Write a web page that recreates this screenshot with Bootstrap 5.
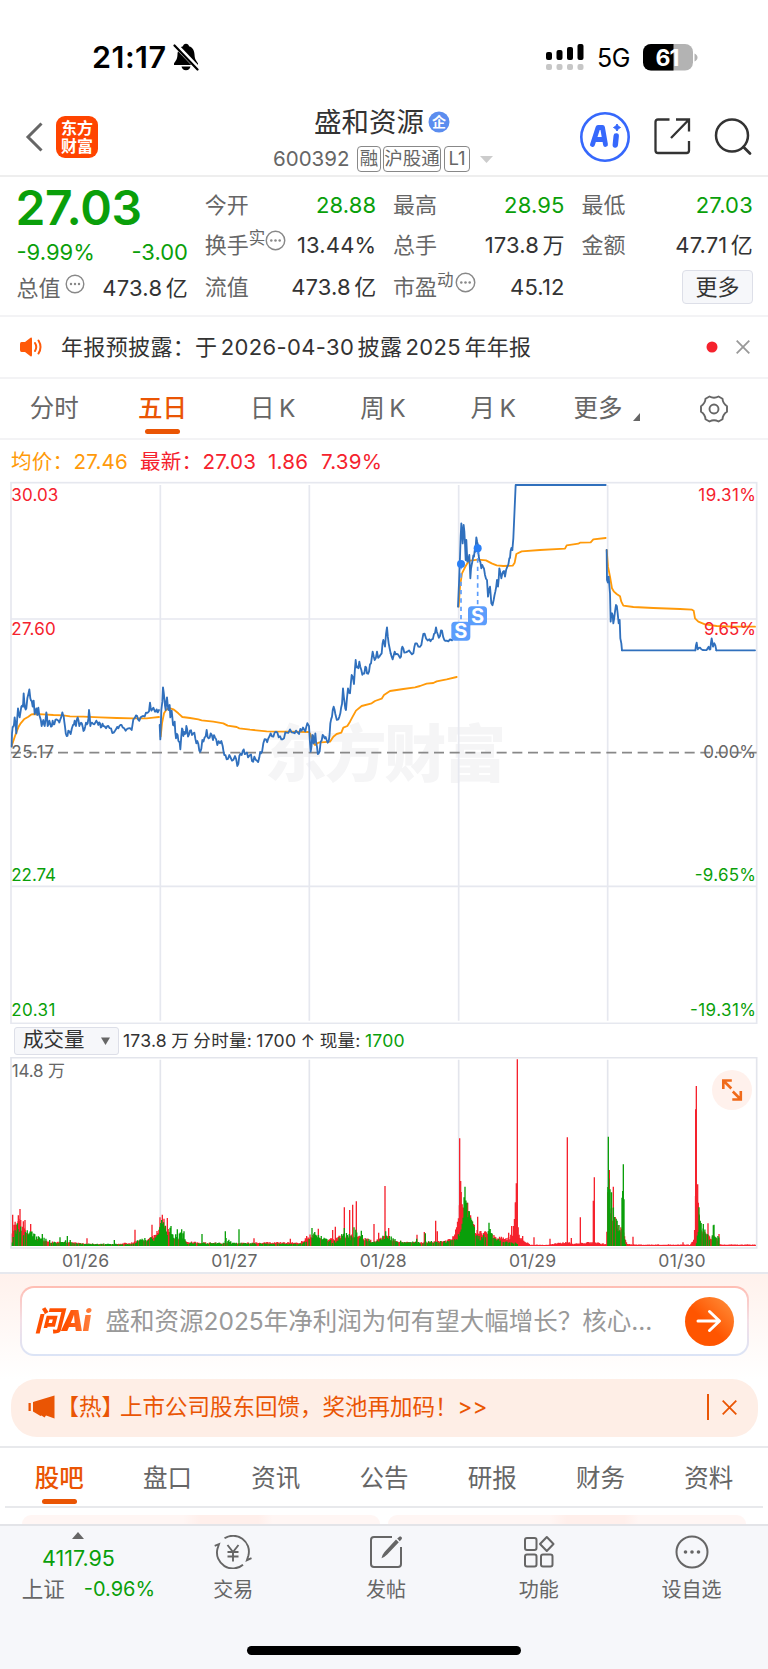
<!DOCTYPE html>
<html lang="zh-CN">
<head>
<meta charset="utf-8">
<meta name="viewport" content="width=device-width, initial-scale=1">
<title>盛和资源 600392</title>
<link href="https://cdn.jsdelivr.net/npm/bootstrap@5.3.0/dist/css/bootstrap.min.css" rel="stylesheet">
<style>
:root{--up:#f5222d;--dn:#0a9f0a;--or:#ea5504;--gr:#666}
body{width:768px;height:1669px;overflow:hidden;margin:0;background:#fff;color:#333;font-family:Inter,"Noto Sans CJK SC",sans-serif;font-size:22px;line-height:1;position:relative}
svg{display:block;flex:none}
.dn{color:var(--dn)}.up{color:var(--up)}.gr{color:var(--gr)}
.statusbar{height:98px;padding:16px 70px 0 92px}
.clock{font-size:30.5px;font-weight:600;color:#000;letter-spacing:.5px;width:78px;white-space:nowrap}
.net{font-size:25px;color:#000;letter-spacing:-.4px}
.head{height:79px;padding:0 16px 0 25px;border-bottom:2px solid #eee}
.logo{width:42px;height:42px;border-radius:9px;background:#ff4400;color:#fff;font-size:16px;line-height:18px;font-weight:700;margin-left:13px}
.stock{font-size:27.5px;height:32px;line-height:32px;color:#333}
.code{font-size:20.5px;color:var(--gr);height:32px}
.tag{border:1.5px solid #888;border-radius:4px;font-size:18.5px;height:26px;line-height:23px;text-align:center;white-space:nowrap;color:var(--gr)}
.quote{height:140px;padding:0 16px 0 16.5px;border-bottom:2px solid #f3f3f5;display:grid;grid-template-columns:repeat(4,171.5px);column-gap:16.8px;word-spacing:-3px}
.quote .cell{height:42px}
.quote .cell:first-child{height:39px}
.quote .cell>span:last-child:not(.more){letter-spacing:.15px}
.price{font-size:48px;font-weight:600;letter-spacing:-.3px;line-height:48px;height:54px;padding-top:7px;margin-left:-1px}
.sup{font-size:16.5px;margin-top:-14px}
.more{width:71px;height:34px;border:1.5px solid #dddfe8;background:#f6f7fa;border-radius:4px;font-size:22px}
.notice{height:62px;border-bottom:2px solid #f3f3f5;padding:0 18px 0 19px}
.noticetext{word-spacing:-3.2px;letter-spacing:.35px}
.ktabs{height:61px;border-bottom:2px solid #f3f3f5;font-size:24.5px;color:var(--gr);word-spacing:-2.5px}
.tabitem{flex:1 1 0;position:relative;height:100%;display:flex;align-items:center;justify-content:center}
.tabitem.on{color:var(--or);font-weight:500}
.tabitem.on::after{content:"";position:absolute;bottom:4px;left:50%;width:35px;height:5.5px;margin-left:-17.5px;border-radius:3px;background:var(--or)}
.ktabs .latin{padding-left:2px}
.legend{height:40px;padding:5px 0 0 11px;font-size:20.6px;letter-spacing:.2px}
.volhead{height:33px;padding-left:14px;font-size:17.6px;color:#333}
.voltext{word-spacing:-.8px;letter-spacing:.2px}
.volbtn{width:105px;height:28px;border:1.5px solid #dddfe8;background:#f6f7fa;border-radius:3px;font-size:20.5px;padding:0 8px}
.dates{height:25px;border-bottom:2px solid #e6e8ee;padding:1px 11px 0;font-size:17.6px;letter-spacing:.2px;color:var(--gr)}
.ask{height:105px;background:linear-gradient(#fff1ec,#fff);padding:12px 19.5px 0}
.askbox{height:70px;border:2px solid transparent;border-radius:14px;background:linear-gradient(#fff,#fff) padding-box,linear-gradient(#ffbdb3,#f3dfe6 50%,#dbe4f6) border-box;padding:0 13px 0 13px}
.wen{font-size:28px;font-weight:900;font-style:italic;letter-spacing:-1px;width:71px;white-space:nowrap;line-height:36px;background:linear-gradient(90deg,#ff5000 45%,#ff8040 80%);-webkit-background-clip:text;color:transparent}
.q{font-size:24.5px;color:#999}
.go{width:49px;height:49px;border-radius:50%;background:linear-gradient(225deg,#ff9440,#ff5500 55%)}
.promo{height:58px;margin:0 10.5px;border-radius:26px;background:#feeee6;color:var(--or);font-size:22.5px;padding:0 21px 2px 17px}
.btabs{height:62px;margin-top:9px;border-top:2px solid #e8e9ec;padding:0 5px;font-size:24.5px;color:var(--gr);position:relative}
.btabs::after{content:"";position:absolute;left:5px;right:5px;bottom:0;height:2px;background:#e8e9ec}
.btabs .tabitem.on::after{bottom:4px}
.peek{height:16px;padding:7px 22px 0;gap:8px}
.peek div{flex:1;background:linear-gradient(90deg,#fff6f4 45%,#ffefeb 50%,#ffefeb 66%,#fff6f4 70%);border-radius:10px 10px 0 0}
.dock{height:146px;background:#f6f7fa;border-top:2px solid #e3e4e8;padding:0 0 0 4px;position:relative;font-size:20px;color:var(--gr)}
.dock .it{width:152.8px;height:120px;padding-top:9px}
.dock .it span{margin-top:11px}
.home{position:absolute;left:247px;bottom:15px;width:274px;height:9px;border-radius:5px;background:#000}
.expand{position:absolute;left:711px;top:12px}
</style>
</head>
<body class="d-flex flex-column">

<div class="statusbar d-flex align-items-center flex-shrink-0">
  <span class="clock">21:17</span>
  <svg style="margin-left:2px" width="28" height="28" viewBox="0 0 28 28"><path d="M14 .8c-1.700 0-2.800 1-3 2.400C7 4.500 5.600 8 5.500 11.500 5.300 16.500 3.500 18 2 20.500V22h24v-1.500c-1.500-2.500-3.300-4-3.500-9-.1-3.500-1.500-7-5.500-8.300C16.800 1.800 15.700.8 14 .8zM9.500 23.500a4.600 4.600 0 0 0 9 0z" fill="#000"/><path d="M3 1.500 26.500 26" stroke="#fff" stroke-width="5"/><path d="M2.500 2.500 25.500 26.500" stroke="#000" stroke-width="2.200" stroke-linecap="round"/></svg>
  <svg class="ms-auto" width="38" height="27" viewBox="0 0 38 27"><g fill="#000"><rect x="0" y="8" width="6" height="8" rx="2"/><rect x="10.500" y="6" width="6" height="10" rx="2"/><rect x="21" y="3" width="6" height="13" rx="2"/><rect x="31.500" y="0" width="6" height="16" rx="2"/></g><g fill="#c6c6c6"><rect x="0" y="20" width="6" height="6" rx="2"/><rect x="10.500" y="20" width="6" height="6" rx="2"/><rect x="21" y="20" width="6" height="6" rx="2"/><rect x="31.500" y="20" width="6" height="6" rx="2"/></g></svg>
  <span class="net" style="margin:3px 13px 0 13px">5G</span>
  <svg width="55" height="27" viewBox="0 0 55 27"><defs><clipPath id="bat"><rect width="50" height="26.500" rx="8"/></clipPath></defs><g clip-path="url(#bat)"><rect width="50" height="27" fill="#b3b3b3"/><rect width="30.500" height="27" fill="#000"/></g><path d="M51.500 9.500c4 1.500 4 6.500 0 8z" fill="#b3b3b3"/><text x="24" y="21.500" font-size="23" font-weight="700" fill="#fff" text-anchor="middle" letter-spacing="-1">61</text></svg>
</div>

<header class="head d-flex align-items-center flex-shrink-0 position-relative">
  <svg width="18" height="30" viewBox="0 0 18 30"><path d="M16.500 1.500 3 15l13.500 13.500" fill="none" stroke="#666" stroke-width="3"/></svg>
  <div class="logo d-flex flex-column align-items-center justify-content-center"><span>东方</span><span>财富</span></div>
  <div class="position-absolute start-0 end-0 d-flex flex-column" style="top:8px;pointer-events:none">
    <div class="stock d-flex align-items-center" style="padding-left:314px">盛和资源
      <svg style="margin-left:4px" width="22" height="22" viewBox="0 0 22 22"><circle cx="11" cy="11" r="10.500" fill="#5b8def"/><text x="11" y="16" font-size="14" font-weight="700" fill="#fff" text-anchor="middle">企</text></svg>
    </div>
    <div class="code d-flex align-items-center" style="padding:2px 0 0 273px;margin-top:4px"><span style="width:84px">600392</span><span class="tag" style="width:24px">融</span><span class="tag" style="margin-left:2px;width:58px">沪股通</span><span class="tag" style="margin-left:3px;width:26px">L1</span>
      <svg style="margin-left:10px" width="13" height="7"><path d="M0 0h13L6.500 7z" fill="#ccc"/></svg></div>
  </div>
  <svg class="ms-auto" width="52" height="52" viewBox="0 0 52 52"><circle cx="26" cy="26" r="23.700" fill="#fff" stroke="#3668fc" stroke-width="2.600"/><path d="M13.500 33.500 19 16.500h4.500l3 17M17 28.500h8" fill="none" stroke="#3668fc" stroke-width="4.800" stroke-linejoin="round" stroke-linecap="round"/><path d="M37.200 25 36.300 34" stroke="#3668fc" stroke-width="5.400" stroke-linecap="round"/><path d="M38 13q.8 2.700 3.500 3.500-2.700.8-3.500 3.500-.8-2.700-3.500-3.500Q37.200 15.700 38 13z" fill="#3668fc" stroke="#3668fc"/></svg>
  <svg style="margin-left:23px" width="37" height="37" viewBox="0 0 37 37"><path d="M15.500 1.500H4Q1.500 1.500 1.500 4v28.500Q1.500 35 4 35h28.500q2.500 0 2.500-2.500V23M22 1.500h13v12M35 1.500 17 20" fill="none" stroke="#333" stroke-width="2.300"/></svg>
  <svg style="margin-left:23px" width="38" height="38" viewBox="0 0 38 38"><circle cx="18" cy="17.500" r="16" fill="none" stroke="#333" stroke-width="2.500"/><path d="m29.500 29 6.500 6.500" stroke="#333" stroke-width="2.800" stroke-linecap="round"/></svg>
</header>

<section class="quote flex-shrink-0">
  <div>
    <div class="price dn">27.03</div>
    <div class="dn d-flex justify-content-between align-items-center" style="height:42px"><span>-9.99%</span><span>-3.00</span></div>
    <div class="d-flex justify-content-between align-items-center" style="height:30px"><span class="gr d-flex">总值<svg width="20" height="20" viewBox="0 0 20 20" style="margin:-3px 0 0 4px"><use href="#dots"/></svg></span><span style="letter-spacing:.25px">473.8 亿</span></div>
  </div>
  <div class="pt-1 mt-1">
    <div class="cell d-flex justify-content-between align-items-center"><span class="gr">今开</span><span class="dn">28.88</span></div>
    <div class="cell d-flex justify-content-between align-items-center"><span class="gr d-flex align-items-center">换手<span class="sup">实</span><svg width="21" height="21" viewBox="0 0 20 20" style="margin-top:-9px"><use href="#dots"/></svg></span><span>13.44%</span></div>
    <div class="cell d-flex justify-content-between align-items-center"><span class="gr">流值</span><span>473.8 亿</span></div>
  </div>
  <div class="pt-1 mt-1">
    <div class="cell d-flex justify-content-between align-items-center"><span class="gr">最高</span><span class="dn">28.95</span></div>
    <div class="cell d-flex justify-content-between align-items-center"><span class="gr">总手</span><span>173.8 万</span></div>
    <div class="cell d-flex justify-content-between align-items-center"><span class="gr d-flex align-items-center">市盈<span class="sup">动</span><svg width="21" height="21" viewBox="0 0 20 20" style="margin:-9px 0 0 1px"><use href="#dots"/></svg></span><span>45.12</span></div>
  </div>
  <div class="pt-1 mt-1">
    <div class="cell d-flex justify-content-between align-items-center"><span class="gr">最低</span><span class="dn">27.03</span></div>
    <div class="cell d-flex justify-content-between align-items-center"><span class="gr">金额</span><span>47.71 亿</span></div>
    <div class="cell d-flex justify-content-end align-items-center"><span class="more d-flex align-items-center justify-content-center">更多</span></div>
  </div>
</section>

<div class="notice d-flex align-items-center flex-shrink-0">
  <svg width="24" height="20" viewBox="0 0 24 20"><path d="M1 7q0-2 1.500-2H6l5.500-4.200Q13 0 13 2v16q0 2-1.500 1.200L6 15H2.500Q1 15 1 13z" fill="#ff5a0a"/><path d="M16 6q2.500 4 0 8M19.500 3.500q4 6.500 0 13" fill="none" stroke="#ff5a0a" stroke-width="2" stroke-linecap="round"/></svg>
  <span class="noticetext" style="margin-left:18px">年报预披露：于 2026-04-30 披露 2025 年年报</span>
  <svg class="ms-auto" width="12" height="12"><circle cx="6" cy="6" r="5.500" fill="#f5222d"/></svg>
  <svg style="margin-left:18px" width="14" height="14" viewBox="0 0 14 14"><path d="m.7.700 12.600 12.600M13.300.700.700 13.300" stroke="#999" stroke-width="1.800"/></svg>
</div>

<nav class="ktabs d-flex flex-shrink-0">
  <div class="tabitem">分时</div><div class="tabitem on">五日</div><div class="tabitem latin">日 K</div><div class="tabitem latin">周 K</div><div class="tabitem latin">月 K</div>
  <div class="tabitem ps-1" style="left:1px">更多<svg style="margin:16px 0 0 10px" width="7" height="8"><path d="M7 0v8H0z" fill="#666"/></svg></div>
  <div class="tabitem"><svg width="30" height="30" viewBox="0 0 30 30"><path d="M10.500 2.500Q15 5 19.500 2.500L23.500 4.800Q23.800 9.500 28 12.200V17.800Q23.800 20.500 23.500 25.200L19.500 27.500Q15 25 10.500 27.500L6.500 25.200Q6.200 20.500 2 17.800V12.200Q6.200 9.500 6.500 4.800z" fill="none" stroke="#666" stroke-width="1.900" stroke-linejoin="round"/><circle cx="15" cy="15" r="4.500" fill="none" stroke="#666" stroke-width="1.900"/></svg></div>
</nav>

<div class="legend d-flex align-items-center flex-shrink-0"><span style="color:#ff9a0a;width:129px">均价：27.46</span><span class="up" style="width:128px">最新：27.03</span><span class="up" style="width:53px">1.86</span><span class="up">7.39%</span></div>

<!-- price chart: drawing units are a third of a pixel -->
<svg id="price" width="768" height="544" viewBox="0 0 2304 1632">
  <defs><g id="dots"><circle cx="10" cy="10" r="8.800" fill="none" stroke="#888" stroke-width="1.400"/><g fill="#888"><circle cx="6" cy="10" r="1.200"/><circle cx="10" cy="10" r="1.200"/><circle cx="14" cy="10" r="1.200"/></g></g></defs>
  <text x="1156" y="892" text-anchor="middle" font-size="186" font-weight="900" fill="#f5f5f6" textLength="724">东方财富</text>
  <g fill="none" stroke="#e6e8ef" stroke-width="5"><rect x="33" y="8" width="2237" height="1622"/><path d="M33 417H2270M33 1219H2270M481 15V1622M928 15V1622M1376 15V1622M1823 15V1622"/></g>
  <path d="M33 818H2270" stroke="#888" stroke-width="5" stroke-dasharray="30 17"/>
  <g id="lines" fill="none" stroke-width="5.500" stroke-linejoin="round" stroke-linecap="round"></g>
  <g stroke="#5b9dfc" stroke-width="5" stroke-dasharray="13 12"><path d="M1383 255V430M1433 210V380"/></g>
  <g fill="#2a7ff5"><circle cx="1383" cy="252" r="12"/><circle cx="1433" cy="205" r="12"/></g>
  <g fill="#5b9dfc"><rect x="1354" y="425" width="57" height="57" rx="11"/><rect x="1404" y="379" width="57" height="57" rx="11"/></g>
  <g fill="#fff" font-size="60" font-weight="700" text-anchor="middle"><text x="1382.500" y="475">S</text><text x="1432.500" y="429">S</text></g>
  <g font-size="51" fill="#f5222d"><text x="34" y="62" textLength="141">30.03</text><text x="34" y="465" textLength="133">27.60</text><text x="2268" y="62" text-anchor="end" textLength="173">19.31%</text><text x="2268" y="465" text-anchor="end" textLength="156">9.65%</text>
  <g fill="#666"><text x="34" y="835" textLength="128">25.17</text><text x="2268" y="835" text-anchor="end" textLength="158">0.00%</text></g>
  <g fill="#0a9f0a"><text x="34" y="1204" textLength="134">22.74</text><text x="34" y="1609" textLength="132">20.31</text><text x="2268" y="1204" text-anchor="end" textLength="184">-9.65%</text><text x="2268" y="1609" text-anchor="end" textLength="198">-19.31%</text></g></g>
</svg>

<div class="volhead d-flex align-items-center flex-shrink-0"><span class="volbtn d-flex align-items-center justify-content-between">成交量<svg width="9" height="8"><path d="M0 .500h9L4.500 8z" fill="#666"/></svg></span><span style="margin-left:4px" class="voltext">173.8 万 分时量: 1700 ↑ 现量: <span class="dn">1700</span></span></div>

<div class="position-relative flex-shrink-0">
<svg id="vol" width="768" height="192" viewBox="0 141 2304 576">
  <g fill="none" stroke="#e3e5ec" stroke-width="5"><path d="M33 143H2270V714H33zM481 149V708M928 149V708M1376 149V708M1823 149V708"/></g>
  <g id="bars" stroke-width="4"></g>
  <text x="35" y="200" font-size="51" fill="#666" textLength="160">14.8 万</text>
</svg>
<svg class="expand" width="42" height="42" viewBox="0 0 42 42"><circle cx="21" cy="21" r="20" fill="#fff1ec"/><path d="M12.300 20v-8.500h8.500M12.300 11.500l8 8M29.800 22v8.500h-8.500M29.800 30.500l-8-8" fill="none" stroke="#f06a1a" stroke-width="2.600"/></svg>
</div>
<div class="dates d-flex align-items-center text-center flex-shrink-0"><span class="flex-fill">01/26</span><span class="flex-fill">01/27</span><span class="flex-fill">01/28</span><span class="flex-fill">01/29</span><span class="flex-fill">01/30</span></div>

<div class="ask flex-shrink-0"><div class="askbox d-flex align-items-center">
  <span class="wen">问Ai</span><span class="q">盛和资源2025年净利润为何有望大幅增长？核心...</span>
  <span class="go ms-auto d-flex align-items-center justify-content-center"><svg width="26" height="24" viewBox="0 0 26 24"><path d="M2 12h21M13.500 2.500 23.500 12l-10 9.500" fill="none" stroke="#fff" stroke-width="3" stroke-linecap="round" stroke-linejoin="round"/></svg></span>
</div></div>

<div class="promo d-flex align-items-center flex-shrink-0">
  <svg width="28" height="24" viewBox="0 0 28 24"><path d="M.5 8h2.300v8H.5zM5 7 26.500.5v23l-7-2.500-1.500-.5-1.500 2-3-2-1 .5L5 16.500z" fill="#ea5504"/></svg>
  <span class="promotext"><span style="margin-left:1px;margin-right:-4px">【热】</span>上市公司股东回馈，奖池再加码！&gt;&gt;</span>
  <span class="ms-auto" style="width:1.500px;height:26px;background:#ea5504"></span>
  <svg style="margin-left:13px" width="15" height="15" viewBox="0 0 15 15"><path d="m.7.700 13.600 13.600M14.300.700.700 14.300" stroke="#ea5504" stroke-width="1.800"/></svg>
</div>

<nav class="btabs d-flex flex-shrink-0"><div class="tabitem on">股吧</div><div class="tabitem">盘口</div><div class="tabitem">资讯</div><div class="tabitem">公告</div><div class="tabitem">研报</div><div class="tabitem">财务</div><div class="tabitem">资料</div></nav>
<div class="peek d-flex flex-shrink-0"><div></div><div></div></div>

<footer class="dock d-flex flex-shrink-0">
  <div class="it d-flex flex-column align-items-center" style="padding:6px 4px 0 0"><svg width="12" height="7"><path d="M0 7h12L6 0z" fill="#666"/></svg><b class="dn fw-normal" style="margin-top:9px;font-size:21.500px">4117.95</b><div class="d-flex dn align-items-center text-nowrap" style="margin-top:9px;margin-left:20px"><i class="gr fst-normal" style="font-size:21.500px;margin-right:19px">上证</i>-0.96%</div></div>
  <div class="it d-flex flex-column align-items-center"><svg width="38" height="34" viewBox="0 0 38 34"><g fill="none" stroke="#666" stroke-width="1.900"><path d="M.7 10.800 5 9.200 3.400 14A15.800 15.800 0 0 0 29 29.700M10.500 3.300A15.800 15.800 0 0 1 34.400 20.500L32.900 25.200 37.500 23.200M13.500 10l5.500 7 5.500-7M19 17v9.500M13.500 17h11M13.500 21.500h11"/></g></svg><span>交易</span></div>
  <div class="it d-flex flex-column align-items-center"><svg width="34" height="34" viewBox="0 0 34 34"><path d="M23 2H5Q2 2 2 5v24q0 3 3 3h24q3 0 3-3V12" fill="none" stroke="#666" stroke-width="2"/><path d="M27 4.500 15.500 17q-2.500 3-3 6.200 3-1 5.700-3.700L29.800 7.200zM28.200 3.500 31 1.300q2.500.7 1.800 2.700l-2 2.300z" fill="#666"/></svg><span>发帖</span></div>
  <div class="it d-flex flex-column align-items-center"><svg width="32" height="34" viewBox="0 0 32 34"><g fill="none" stroke="#666" stroke-width="2"><rect x="2" y="3" width="11.500" height="12" rx="2"/><rect x="2" y="19.500" width="11.500" height="12" rx="2"/><rect x="18" y="19.500" width="11.500" height="12" rx="2"/><path d="M23.800 2 30.500 9l-6.700 7L17 9z" stroke-linejoin="round"/></g></svg><span>功能</span></div>
  <div class="it d-flex flex-column align-items-center"><svg width="34" height="34" viewBox="0 0 34 34"><circle cx="17" cy="17" r="15.500" fill="none" stroke="#666" stroke-width="2"/><g fill="#666"><circle cx="10.500" cy="17" r="1.800"/><circle cx="17" cy="17" r="1.800"/><circle cx="23.500" cy="17" r="1.800"/></g></svg><span>设自选</span></div>
  <div class="home"></div>
</footer>

<script src="https://cdn.jsdelivr.net/npm/bootstrap@5.3.0/dist/js/bootstrap.bundle.min.js"></script>
<script>
let seed = 7;
const rnd = () => (seed = (seed * 16807) % 2147483647) / 2147483647;
const NS = 'http://www.w3.org/2000/svg';
function add(parent, d, color) {
  const p = document.createElementNS(NS, 'path');
  p.setAttribute('d', d); p.setAttribute('stroke', color);
  document.getElementById(parent).append(p);
}
// average price, one series per trading day
const avg = [
 '35,798 45,768 55,742 62,730 72,718 85,710 95,703 105,702 130,703 160,705 190,706 210,709 250,710 300,712 350,714 400,715 440,715 460,713 477,711',
 '482,770 486,730 492,700 500,688 508,684 520,688 535,700 547,711 570,714 595,718 605,721 640,725 670,730 683,737 710,741 718,745 750,749 800,754 860,755 925,756',
 '930,760 938,785 945,795 955,788 990,785 1000,770 1010,762 1024,758 1030,743 1042,738 1050,725 1058,710 1068,692 1085,678 1115,670 1125,663 1145,656 1152,645 1170,633 1210,627 1245,622 1260,618 1280,611 1300,609 1310,604 1340,598 1370,591',
 '1376,380 1380,320 1386,280 1395,262 1402,250 1410,242 1435,239 1458,241 1475,250 1490,256 1510,258 1538,257 1544,248 1549,222 1565,214 1620,210 1695,206 1700,196 1735,191 1740,188 1772,187 1780,178 1817,174',
 '1820,210 1824,260 1830,290 1836,325 1842,335 1850,342 1860,349 1864,365 1870,377 1900,381 1960,384 2040,387 2076,389 2081,392 2085,415 2095,425 2115,433 2150,438 2200,440 2265,440'
];
// last price: jitter amplitude followed by the points of the segment
const last = [
 [10,'35,800 36,760 40,740 44,712 49,760 54,685 59,712 64,680 69,680 71,640 75,683 79,685 82,655 88,628 91,655 95,662 98,680 101,662 104,702 109,685 112,705 115,683 120,712 125,738 130,720 134,738 139,697 143,738 148,722 153,740 158,722 163,733 170,718 175,722 181,718 187,697 191,708 195,740 200,768 205,752 212,762 219,735 224,722 228,738 233,712 238,738 243,728 248,740 253,750 258,728 263,730 267,690 271,738 276,728 283,733 289,722 295,735 300,730 305,740 310,738 318,745 325,738 333,745 341,758 348,748 355,745 361,735 368,742 377,752 385,745 395,750 400,718 408,706 414,718 422,712 430,708 438,698 447,694 450,668 454,692 460,683 465,695 470,688 477,690'],
 [12,'479,735 481,778 484,690 487,665 489,622 493,655 497,690 501,652 505,690 509,675 511,712 515,692 519,735 524,725 528,775 533,765 537,785 541,808 546,745 550,768 555,762 559,738 564,770 570,752 576,765 583,758 589,790 595,792 601,815 607,780 614,772 620,750 626,775 632,760 639,780 645,772 652,795 660,790 668,798 673,825 680,838 688,825 696,842 705,828 712,858 718,828 725,825 731,808 738,820 744,832 750,825 756,843 763,830 771,842 778,832 783,820 790,790 798,778 805,775 812,760 820,770 828,755 836,772 844,778 852,775 860,758 870,748 880,758 888,752 897,762 905,752 913,750 919,740 925,735'],
 [14,'927,738 932,815 937,765 941,790 946,760 951,800 956,820 962,785 968,765 974,775 980,780 986,785 991,730 996,710 1001,680 1006,702 1015,718 1021,700 1026,672 1029,625 1034,670 1038,690 1044,625 1050,640 1055,585 1062,612 1067,540 1072,560 1078,545 1084,570 1090,580 1096,560 1101,580 1107,575 1113,550 1118,515 1124,540 1131,515 1138,530 1145,520 1150,480 1155,500 1161,442 1166,490 1172,520'],
 [10,'1172,520 1178,538 1184,515 1190,522 1197,528 1203,530 1207,500 1213,518 1222,515 1232,518 1240,520 1246,490 1255,500 1264,495 1270,462 1278,475 1288,478 1295,478 1302,462 1308,442 1313,462 1320,468 1326,452 1333,480 1340,482 1350,478 1362,470'],
 [12,'1374,380 1377,310 1380,230 1384,130 1388,190 1391,135 1395,190 1397,240 1399,180 1402,245 1405,240 1408,225 1411,295 1415,255 1418,240 1422,230 1426,215 1429,172 1434,195 1438,240 1444,265 1449,260 1455,285 1461,300 1464,350 1470,320 1474,370 1481,360 1486,335 1491,300 1494,320 1498,265 1504,295 1509,275 1515,290 1522,260 1528,235 1532,212 1537,210'],
 [0,'1537,210 1540,175 1547,15 1817,15'],
 [16,'1820,210 1821,300 1826,290 1830,340 1832,425 1836,400 1840,430 1845,395 1848,375 1853,400 1856,430 1859,420 1861,475 1864,490 1866,511'],
 [0,'1866,511 2086,511'],
 [5,'2086,511 2090,488 2093,508 2100,503 2108,510 2120,510 2126,500 2131,508 2135,475 2139,500 2143,490 2149,511'],
 [0,'2149,511 2265,511']
];
avg.forEach(s => add('lines', 'M' + s.replace(/ /g, 'L'), '#ff9a0a'));
last.forEach(([amp, s]) => {
  const pts = s.split(' ').map(p => p.split(',').map(Number));
  let d = 'M' + pts[0];
  for (let i = 1; i < pts.length; i++) {
    const [a, b] = pts[i - 1], [x, y] = pts[i];
    if (amp && x - a > 3) d += 'L' + ((a + x) / 2).toFixed(1) + ',' + ((b + y) / 2 + (rnd() - .5) * amp * 1.8).toFixed(1);
    d += 'L' + x + ',' + y;
  }
  add('lines', d, '#3070bd');
});
// volume envelopes [x, height] for both colours, bars stand on y = 708
const red = [[36,60],[42,70],[55,85],[62,80],[70,60],[85,40],[110,24],[150,14],[200,14],[260,8],[340,6],[395,12],[420,18],[450,26],[478,60],[490,75],[503,55],[520,30],[550,18],[600,12],[700,10],[800,12],[900,12],[920,26],[935,40],[970,18],[1010,30],[1050,38],[1085,30],[1120,16],[1155,36],[1180,20],[1230,12],[1290,14],[1340,18],[1360,32],[1374,80],[1380,190],[1390,140],[1405,110],[1425,60],[1450,50],[1480,34],[1510,28],[1525,25],[1540,55],[1547,180],[1556,40],[1572,20],[1590,5],[1640,4],[1700,14],[1720,8],[1780,14],[1820,6],[1822,200],[1828,170],[1840,110],[1855,70],[1870,45],[1880,10],[1895,5],[2070,5],[2083,30],[2086,180],[2094,120],[2105,60],[2125,35],[2150,30],[2160,5],[2268,5]];
const green = [[36,10],[45,50],[55,60],[75,50],[95,44],[110,30],[150,20],[180,10],[205,26],[225,8],[395,6],[410,18],[470,30],[485,75],[495,70],[515,50],[550,44],[558,10],[670,10],[680,35],[695,10],[900,7],[925,18],[935,50],[965,28],[1000,14],[1035,42],[1055,32],[1070,50],[1090,30],[1120,12],[1160,38],[1180,24],[1210,12],[1350,16],[1374,24],[1388,130],[1395,165],[1405,110],[1415,80],[1435,28],[1460,38],[1470,55],[1480,32],[1515,14],[1545,12],[1560,0],[1822,0],[1823,220],[1832,170],[1845,110],[1860,60],[1872,40],[1878,0],[2088,0],[2098,95],[2108,55],[2130,34],[2155,34],[2162,0],[2268,0]];
const env = (k, x) => { for (let i = 1; i < k.length; i++) if (x <= k[i][0]) { const [a, b] = k[i - 1], [c, e] = k[i]; return b + (e - b) * (x - a) / (c - a || 1); } return 0; };
let R = '', G = '';
for (let x = 37; x < 2268; x += 2.8) {
  const r = env(red, x) * (.6 + .4 * rnd()), g = env(green, x) * (.5 + .55 * rnd());
  if (r > 1) R += `M${x.toFixed(1)} 708v${-r.toFixed(1)}`;
  if (g > 3 && rnd() < .78) G += `M${x.toFixed(1)} 708v${-g.toFixed(1)}`;
}
[[38,94],[55,92],[60,111],[70,74],[75,78],[92,66],[261,23],[405,49],[456,64],[480,86],[487,94],[492,82],[502,84],[762,23],[871,22],[920,30],[955,52],[998,48],[1006,58],[1033,116],[1049,108],[1058,124],[1069,134],[1122,66],[1136,40],[1155,180],[1166,54],[1251,34],[1273,42],[1307,76],[1312,44],[1379,323],[1382,195],[1403,130],[1433,88],[1526,40],[1535,60],[1546,128],[1549,188],[1552,560],[1568,30],[1602,26],[1650,22],[1702,326],[1714,24],[1741,86],[1780,136],[1783,206],[1828,228],[1840,178],[1899,28],[2049,11],[2087,410],[2089,480],[2093,185],[2095,130],[2124,68],[2157,36]].forEach(([x, h]) => R += `M${x} 708v${-h}`);
[[52,68],[127,36],[180,26],[202,30],[343,18],[485,78],[513,60],[532,50],[545,50],[552,44],[606,36],[676,44],[717,50],[936,54],[1033,54],[1062,56],[1084,46],[1157,44],[1250,22],[1276,38],[1395,178],[1408,104],[1467,70],[1825,328],[1830,170],[1866,145],[1868,165],[1870,245],[1872,140],[2097,116],[2110,66],[2140,62],[2142,64]].forEach(([x, h]) => G += `M${x} 708v${-h}`);
add('bars', R, '#f5222d');
add('bars', G, '#0a9f0a');
</script>
</body>
</html>
